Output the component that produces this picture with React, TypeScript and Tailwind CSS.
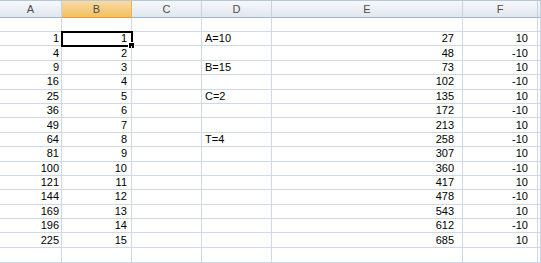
import React from "react";

// Column layout of the sheet: letter + pixel width
const columns = [
  { key: "A", width: "w-[62px]" },
  { key: "B", width: "w-[70px]" },
  { key: "C", width: "w-[70px]" },
  { key: "D", width: "w-[70px]" },
  { key: "E", width: "w-[191px]" },
  { key: "F", width: "w-[75px]" },
  { key: "", width: "flex-1" },
];

const labels: Record<number, string> = { 0: "A=10", 2: "B=15", 4: "C=2", 7: "T=4" };

const rows = Array.from({ length: 15 }, (_, i) => {
  const n = i + 1;
  return {
    a: n * n,
    b: n,
    d: labels[i] ?? "",
    e: 2 * n * n + 15 * n + 10,
    f: i % 2 === 0 ? 10 : -10,
  };
});

function HeaderCell({ label, width, active }: { label: string; width: string; active: boolean }) {
  return (
    <div
      className={`${width} h-full flex items-center justify-center border-r border-b shrink-0 ${
        active
          ? "bg-gradient-to-b from-[#f9dba3] to-[#f2c060] border-r-[#e8b25a] border-b-[#f29536]"
          : "bg-gradient-to-b from-[#f6f8fa] to-[#e1e7ef] border-r-[#c6d2df] border-b-[#9eb6ce]"
      }`}
    >
      <span className="text-[11px] text-[#4c4c4c]">{label}</span>
    </div>
  );
}

function Cell({
  width,
  children,
  align = "right",
  pad = "pr-[2px]",
}: {
  width: string;
  children?: React.ReactNode;
  align?: "left" | "right";
  pad?: string;
}) {
  return (
    <div
      className={`${width} h-full shrink-0 border-r border-[#d0d7e5] flex items-center ${
        align === "right" ? `justify-end ${pad}` : "justify-start pl-[3px]"
      }`}
    >
      {children}
    </div>
  );
}

export default function App() {
  return (
    <div
      className="w-[541px] h-[263px] overflow-hidden bg-white text-[11px] text-black leading-none"
      style={{ fontFamily: '"Liberation Sans", Arial, sans-serif' }}
    >
      {/* column headers */}
      <div className="flex h-[18px] border-t border-[#b7c7d8]">
        {columns.map((c, i) => (
          <HeaderCell key={i} label={c.key} width={c.width} active={c.key === "B"} />
        ))}
      </div>

      {/* blank first row */}
      <div className="flex h-[14px] border-b border-[#d0d7e5]">
        {columns.map((c, i) => (
          <Cell key={i} width={c.width} />
        ))}
      </div>

      {rows.map((r, i) => (
        <div key={i} className="flex h-[14.4px] border-b border-[#d0d7e5]">
          <Cell width="w-[62px]">{r.a}</Cell>
          <div className="w-[70px] h-full shrink-0 border-r border-[#d0d7e5] flex items-center justify-end pr-[4px] relative">
            {r.b}
            {i === 0 && (
              <>
                {/* active cell outline + fill handle */}
                <div className="absolute -left-[1px] -top-[1px] w-[72px] h-[16px] border-[2px] border-black" />
                <div className="absolute -right-[3px] -bottom-[3px] w-[5px] h-[5px] bg-black outline outline-1 outline-white" />
              </>
            )}
          </div>
          <Cell width="w-[70px]" />
          <Cell width="w-[70px]" align="left">
            {r.d}
          </Cell>
          <Cell width="w-[191px]" pad="pr-[8px]">
            {r.e}
          </Cell>
          <Cell width="w-[75px]" pad="pr-[9px]">
            {r.f}
          </Cell>
          <Cell width="flex-1" />
        </div>
      ))}

      {/* trailing empty row, cut off by the window */}
      <div className="flex h-[15px] border-b border-[#d0d7e5]">
        {columns.map((c, i) => (
          <Cell key={i} width={c.width} />
        ))}
      </div>
    </div>
  );
}
